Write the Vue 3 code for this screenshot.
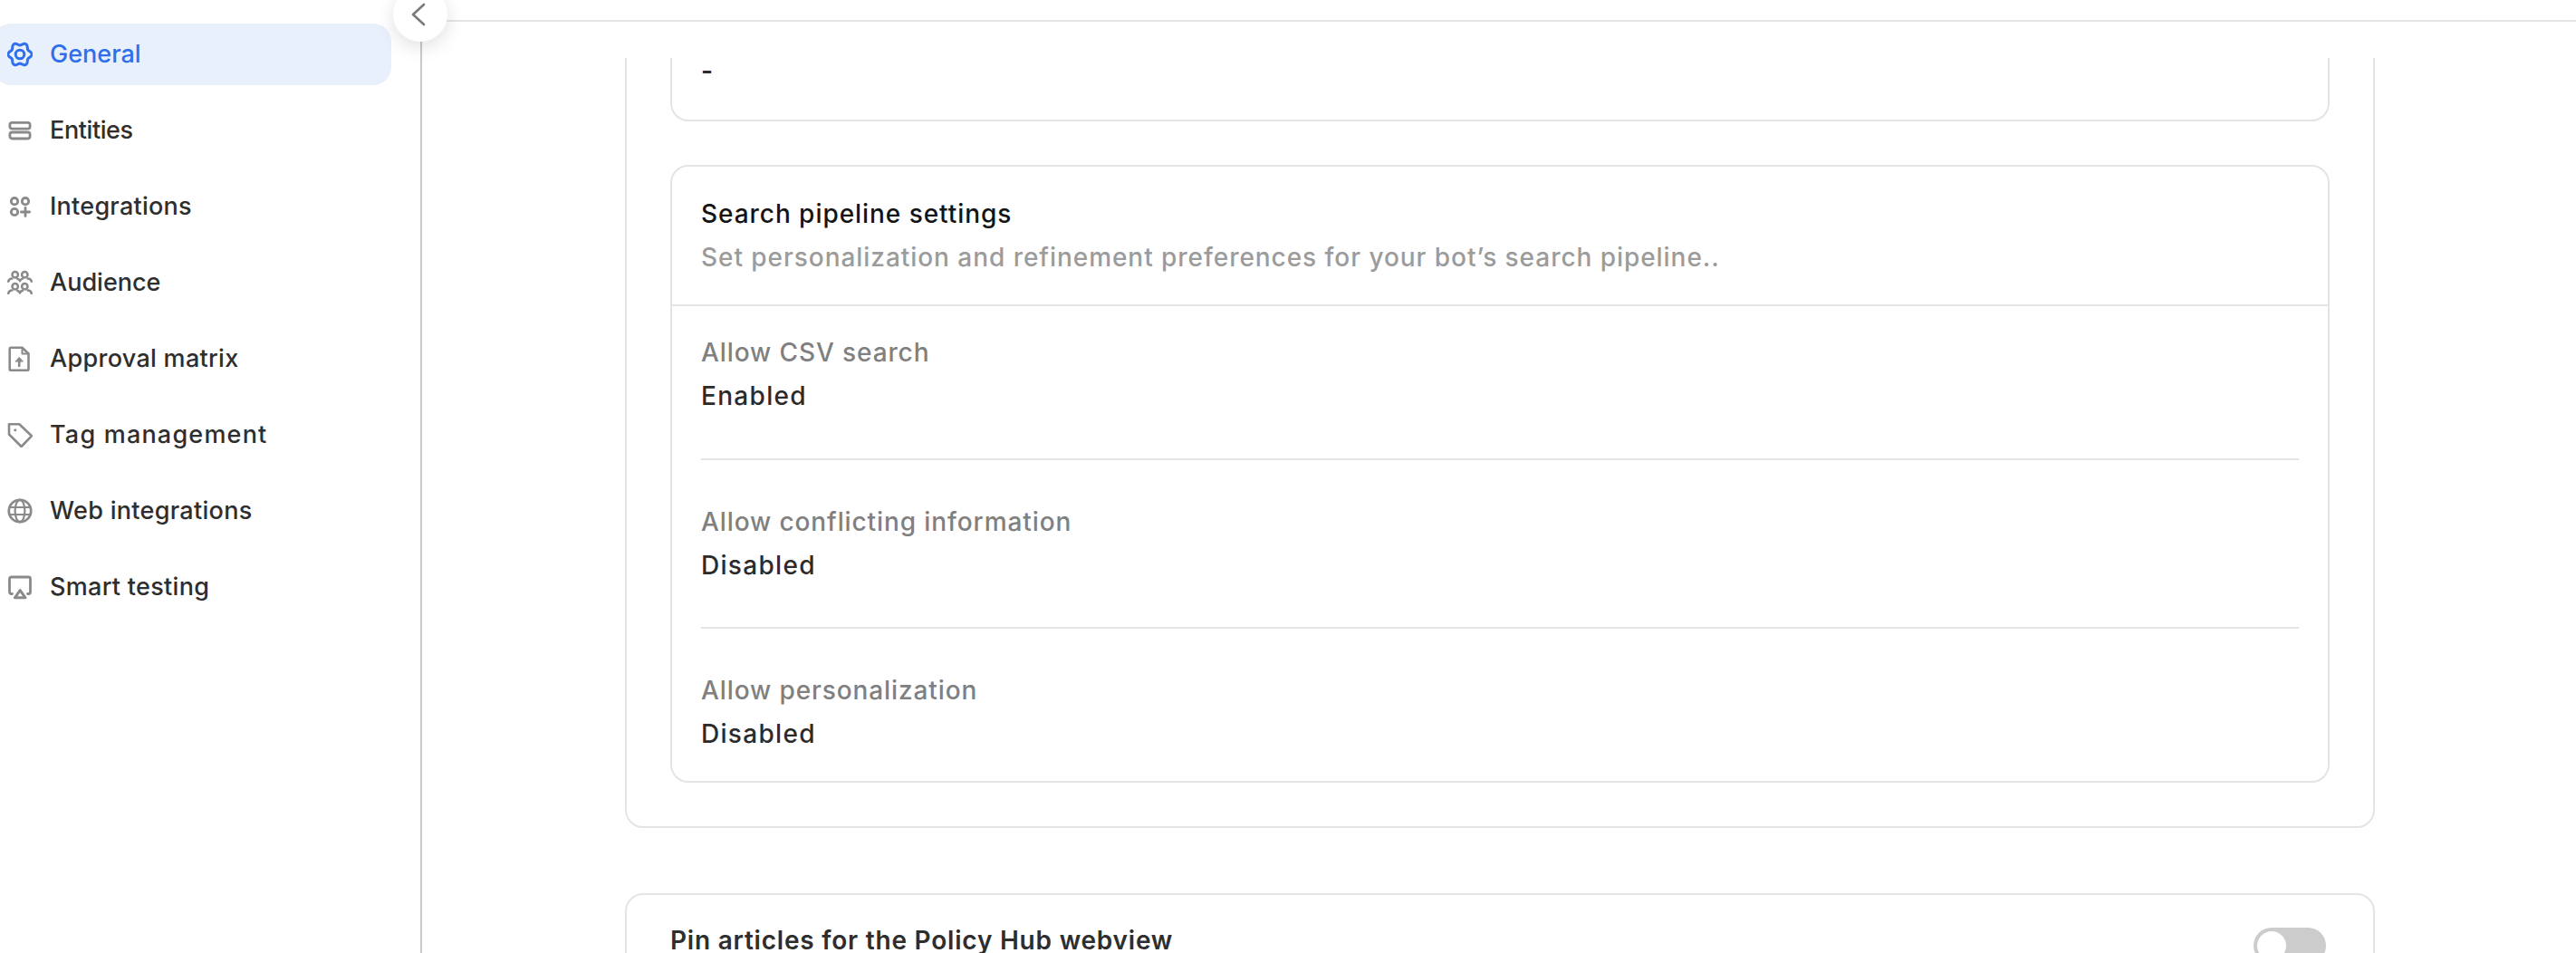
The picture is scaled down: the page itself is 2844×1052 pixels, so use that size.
<script setup>
const navItems = [
  { key: 'general', label: 'General', active: true, ls: 0 },
  { key: 'entities', label: 'Entities', ls: -0.4 },
  { key: 'integrations', label: 'Integrations', ls: 0.25 },
  { key: 'audience', label: 'Audience', ls: 0 },
  { key: 'approval', label: 'Approval matrix', ls: 0.3 },
  { key: 'tag', label: 'Tag management', ls: 1.2 },
  { key: 'web', label: 'Web integrations', ls: 0.3 },
  { key: 'smart', label: 'Smart testing', ls: 0.3 },
]
const rows = [
  { label: 'Allow CSV search', value: 'Enabled' },
  { label: 'Allow conflicting information', value: 'Disabled' },
  { label: 'Allow personalization', value: 'Disabled' },
]
const steps = 96
const pts = []
for (let i = 0; i < steps; i++) {
  const t = (i / steps) * Math.PI * 2
  const r = 11.6 + 1.5 * Math.cos(6 * t)
  pts.push((14 + r * Math.cos(t)).toFixed(2) + ' ' + (14 + r * Math.sin(t)).toFixed(2))
}
const gearPath = 'M' + pts.join('L') + 'Z'
</script>

<template>
  <div class="page">
    <aside class="sidebar">
      <nav class="nav">
        <a v-for="item in navItems" :key="item.key" class="nav-item" :class="{ active: item.active }">
          <svg class="nav-icon" viewBox="0 0 28 28" fill="none" stroke="currentColor" stroke-width="2.6" stroke-linecap="round" stroke-linejoin="round">
            <template v-if="item.key === 'general'">
              <path :d="gearPath" stroke-width="3" />
              <circle cx="14" cy="14" r="4.8" stroke-width="3" />
            </template>
            <template v-else-if="item.key === 'entities'">
              <rect x="2.9" y="5.4" width="22.2" height="6.8" rx="2.4" stroke-width="2.8" />
              <rect x="2.9" y="16" width="22.2" height="7" rx="2.4" stroke-width="2.8" />
            </template>
            <template v-else-if="item.key === 'integrations'">
              <circle cx="8" cy="8.2" r="3.7" stroke-width="2.8" />
              <circle cx="20" cy="8.2" r="3.7" stroke-width="2.8" />
              <circle cx="8" cy="20" r="3.7" stroke-width="2.8" />
              <path d="M20 15.4v9.2M15.4 20h9.2" stroke-width="2.8" />
            </template>
            <template v-else-if="item.key === 'audience'">
              <g stroke-width="2.5">
                <circle cx="8.7" cy="5.2" r="3.2" />
                <circle cx="19.3" cy="5.2" r="3.2" />
                <path d="M1.2 12.6c.6-2.2 2.4-3.2 4.2-3.2M26.8 12.6c-.6-2.2-2.4-3.2-4.2-3.2M11.2 9.6c1.6.5 2.4 1.4 2.8 2.6.4-1.2 1.2-2.1 2.8-2.6" />
                <circle cx="8.7" cy="18.2" r="3.2" />
                <circle cx="19.3" cy="18.2" r="3.2" />
                <path d="M1.2 25.8c.6-2.2 2.4-3.2 4.2-3.2M26.8 25.8c-.6-2.2-2.4-3.2-4.2-3.2M11.2 22.8c1.6.5 2.4 1.4 2.8 2.6.4-1.2 1.2-2.1 2.8-2.6" />
              </g>
            </template>
            <template v-else-if="item.key === 'approval'">
              <path d="M4 1.7h12.5l7 6.8v17a1.3 1.3 0 0 1-1.3 1.3H4a1.3 1.3 0 0 1-1.3-1.3V3A1.3 1.3 0 0 1 4 1.7Z" />
              <path d="M16.5 2v6.5h7" stroke-width="2" />
              <path d="M13.2 22v-6" stroke-width="2.6" />
              <path d="M9.2 16.8 13.2 12.4l4 4.4Z" fill="currentColor" stroke-width="1" />
            </template>
            <template v-else-if="item.key === 'tag'">
              <path d="M2 2.2h11.3L27 15.2 15.6 27 2 13.5Z" />
              <circle cx="8.8" cy="8.8" r="1.5" fill="currentColor" stroke="none" />
            </template>
            <template v-else-if="item.key === 'web'">
              <circle cx="14" cy="14" r="12.2" stroke-width="2.8" />
              <ellipse cx="14" cy="14" rx="5.4" ry="12.2" stroke-width="2.2" />
              <path d="M2.6 10h22.8M2.6 18h22.8" stroke-width="2.2" />
            </template>
            <template v-else>
              <path d="M5.5 21.5H4.5A2 2 0 0 1 2.5 19.5V5A2 2 0 0 1 4.5 3h19A2 2 0 0 1 25.5 5v14.5a2 2 0 0 1-2 2h-1" stroke-width="2.8" />
              <path d="M14.2 17.6 20 25.8H8.4Z" stroke-width="3" />
            </template>
          </svg>
          <span class="nav-label" :style="{ letterSpacing: item.ls + 'px' }">{{ item.label }}</span>
        </a>
      </nav>
    </aside>

    <button class="collapse" aria-label="Collapse sidebar">
      <svg viewBox="0 0 20 28" width="20" height="28" fill="none" stroke="#7a7a7a" stroke-width="2.6" stroke-linecap="round" stroke-linejoin="round">
        <path d="M16 3 4 14l12 11" />
      </svg>
    </button>

    <main class="main">
      <div class="topbar"></div>
      <div class="scroller">
        <section class="outer">
          <div class="inner first">
            <div class="value">-</div>
          </div>
          <div class="inner second">
            <header class="inner-head">
              <div class="inner-title">Search pipeline settings</div>
              <div class="inner-desc">Set personalization and refinement preferences for your bot’s search pipeline..</div>
            </header>
            <div class="rows">
              <div v-for="row in rows" :key="row.label" class="row">
                <div class="label">{{ row.label }}</div>
                <div class="value">{{ row.value }}</div>
              </div>
            </div>
          </div>
        </section>
        <section class="outer pin">
          <div class="pin-title">Pin articles for the Policy Hub webview</div>
          <span class="toggle"><span class="knob"></span></span>
        </section>
      </div>
    </main>
  </div>
</template>

<style scoped>
.page {
  display: flex;
  position: relative;
  height: 1052px;
  overflow: hidden;
  background: #fff;
  font-family: Inter, "Open Sans", sans-serif;
  font-weight: 500;
  font-size: 28px;
  letter-spacing: 0.95px;
  line-height: 42px;
}
.sidebar {
  width: 466px;
  flex: none;
  box-sizing: border-box;
  border-right: 2px solid #c9c9c9;
  padding: 26px 32px 0 0;
}
.nav {
  display: flex;
  flex-direction: column;
  gap: 16px;
  margin-left: -8px;
}
.nav-item {
  display: flex;
  align-items: center;
  gap: 19px;
  height: 68px;
  padding-left: 16px;
  border-radius: 20px;
  color: #8a8a8a;
}
.nav-item.active {
  background: #e8f0fb;
  color: #2f6fed;
}
.nav-icon {
  width: 28px;
  height: 28px;
  flex: none;
}
.nav-label {
  color: #2e2e2e;
  font-size: 27px;
}
.active .nav-label {
  color: #2f6fed;
}
.collapse {
  position: absolute;
  left: 434px;
  top: -14px;
  width: 60px;
  height: 60px;
  padding: 0 4px 0 0;
  border: none;
  border-radius: 50%;
  background: #fff;
  box-shadow: 0 6px 20px rgba(0, 0, 0, 0.12);
  display: flex;
  align-items: center;
  justify-content: center;
  z-index: 2;
}
.main {
  flex: 1;
  min-width: 0;
  display: flex;
  flex-direction: column;
}
.topbar {
  height: 22px;
  flex: none;
  border-bottom: 2px solid #e4e4e4;
}
.scroller {
  margin-top: 40px;
  padding-left: 2px;
  flex: 1;
  min-height: 0;
  overflow: hidden;
  display: flex;
  flex-direction: column;
  align-items: center;
  gap: 72px;
}
.outer {
  width: 1932px;
  flex: none;
  box-sizing: border-box;
  border: 2px solid #e4e4e4;
  border-radius: 20px;
  padding: 48px;
}
.outer:first-child {
  margin-top: -152px;
}
.inner {
  border: 2px solid #e4e4e4;
  border-radius: 20px;
}
.first {
  padding: 100px 32px 40px;
}
.first .value {
  line-height: 28px;
  font-weight: 600;
}
.second {
  margin-top: 48px;
}
.inner-head {
  padding: 31px 32px 31px;
  border-bottom: 2px solid #e4e4e4;
  display: flex;
  flex-direction: column;
  gap: 6px;
}
.inner-title {
  color: #141414;
}
.inner-desc {
  color: #9b9b9b;
}
.rows {
  padding: 0 32px;
}
.row {
  display: flex;
  flex-direction: column;
  gap: 6px;
  padding: 47px 0 47px;
  border-bottom: 2px solid #e4e4e4;
}
.row:first-child {
  padding: 30px 0 48px;
}
.row:last-child {
  padding-bottom: 31px;
  border-bottom: none;
}
.label {
  color: #808080;
  letter-spacing: 0.9px;
}
.value {
  color: #2b2b2b;
  letter-spacing: 1.3px;
}
.pin {
  position: relative;
  display: flex;
  justify-content: space-between;
  align-items: flex-start;
  padding: 36px 52px 48px 48px;
  height: 200px;
}
.pin-title {
  color: #2e2e2e;
  font-weight: 600;
  letter-spacing: 0.78px;
  margin-top: -7px;
}
.toggle {
  display: block;
  width: 80px;
  height: 40px;
  box-sizing: border-box;
  padding: 4px;
  border-radius: 20px;
  background: #cccccc;
}
.knob {
  display: block;
  width: 32px;
  height: 32px;
  border-radius: 50%;
  background: #fff;
}
</style>
